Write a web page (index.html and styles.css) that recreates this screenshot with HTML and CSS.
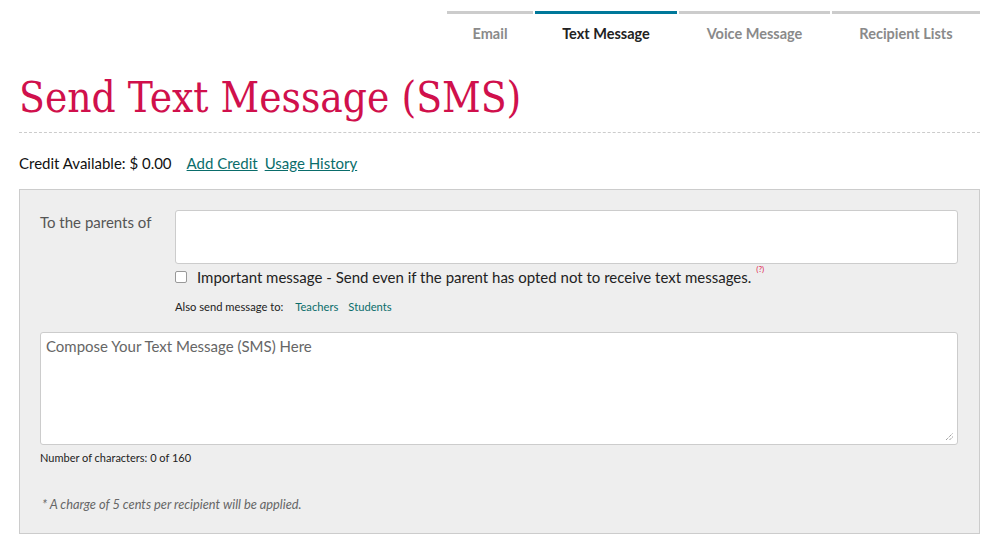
FILE: index.html
```html
<!DOCTYPE html>
<html>
<head>
<meta charset="utf-8">
<link rel="stylesheet" href="styles.css">
</head>
<body>
<div class="page">
  <nav class="tabs">
    <a class="tab tab-email">Email</a>
    <a class="tab tab-text active">Text Message</a>
    <a class="tab tab-voice">Voice Message</a>
    <a class="tab tab-lists">Recipient Lists</a>
  </nav>
  <h1 class="title">Send Text Message (SMS)</h1>
  <div class="credit">
    <span class="credit-label">Credit Available: $ 0.00</span>
    <a class="link link-add">Add Credit</a>
    <a class="link">Usage History</a>
  </div>
  <div class="panel">
    <div class="to-row">
      <div class="to-label">To the parents of</div>
      <div class="to-field">
        <div class="input"></div>
        <label class="check-row"><span class="checkbox"></span><span class="check-text">Important message - Send even if the parent has opted not to receive text messages.</span><sup class="help">(?)</sup></label>
        <div class="also">Also send message to: <a class="small-link first">Teachers</a><a class="small-link">Students</a></div>
      </div>
    </div>
    <div class="textarea">
      <span class="placeholder">Compose Your Text Message (SMS) Here</span>
      <svg class="grip" width="9" height="9" viewBox="0 0 9 9"><path d="M1 8 L8 1 M4.5 8 L8 4.5" stroke="#777" stroke-width="1" stroke-dasharray="1 1" fill="none"/></svg>
    </div>
    <div class="count">Number of characters: 0 of 160</div>
    <div class="note">* A charge of 5 cents per recipient will be applied.</div>
  </div>
</div>
</body>
</html>
```
FILE: styles.css
```css
* { box-sizing: border-box; }
body { margin: 0; background: #fff; font-family: "Lato", "Open Sans", sans-serif; color: #222; }
.page { width: 961px; margin-left: 19px; padding-top: 11px; }
.tabs { display: flex; justify-content: flex-end; gap: 2px; }
.tab { display: block; border-top: 3px solid #ccc; padding-top: 11px; height: 33px; text-align: center; font-weight: bold; font-size: 14.5px; line-height: 18px; color: #8a8a8a; }
.tab-email { width: 86px; }
.tab-text { width: 142px; }
.tab-voice { width: 151px; }
.tab-lists { width: 148px; }
.tab.active { border-top-color: #00789a; color: #222; }
.title { margin: 26px 0 0; font-family: "DejaVu Serif Condensed", "DejaVu Serif", serif; font-weight: normal; font-size: 42px; color: #d0104c; line-height: 56px; padding-bottom: 6px; border-bottom: 1px dashed #ccc; }
.credit { margin-top: 20px; font-size: 15px; line-height: 20px; height: 20px; display: flex; align-items: center; }
.credit-label { color: #111; }
.link { color: #0a6d6b; text-decoration: underline; margin-left: 7px; }
.link-add { margin-left: 15px; }
.panel { margin-top: 16px; background: #eee; border: 1px solid #ccc; padding: 20px 21px 22px 20px; }
.to-row { display: flex; }
.to-label { width: 135px; font-size: 15px; line-height: 18px; color: #555; padding-top: 3px; }
.to-field { flex: 1; }
.input { height: 54px; background: #fff; border: 1px solid #ccc; border-radius: 3px; }
.check-row { display: flex; align-items: center; margin-top: 4px; font-size: 15px; line-height: 18px; color: #222; }
.checkbox { width: 12px; height: 12px; border: 1px solid #999; border-radius: 2px; background: #fff; margin-right: 10px; }
.help { color: #e0204c; font-size: 8px; line-height: 10px; margin-left: 5px; align-self: flex-start; margin-top: -4px; }
.also { margin-top: 14px; font-size: 11.2px; line-height: 14px; color: #222; }
.small-link { color: #0a6d6b; margin-left: 10px; }
.small-link.first { margin-left: 9px; }
.textarea { position: relative; margin-top: 18px; height: 113px; background: #fff; border: 1px solid #ccc; border-radius: 3px; padding: 4px 5px; line-height: 18px; }
.placeholder { font-size: 15px; color: #666; }
.grip { position: absolute; right: 3px; bottom: 3px; }
.count { margin-top: 6px; font-size: 11px; line-height: 14px; color: #222; }
.note { margin-top: 32px; margin-left: 2px; font-size: 12.8px; line-height: 14px; font-style: italic; color: #666; }
```
